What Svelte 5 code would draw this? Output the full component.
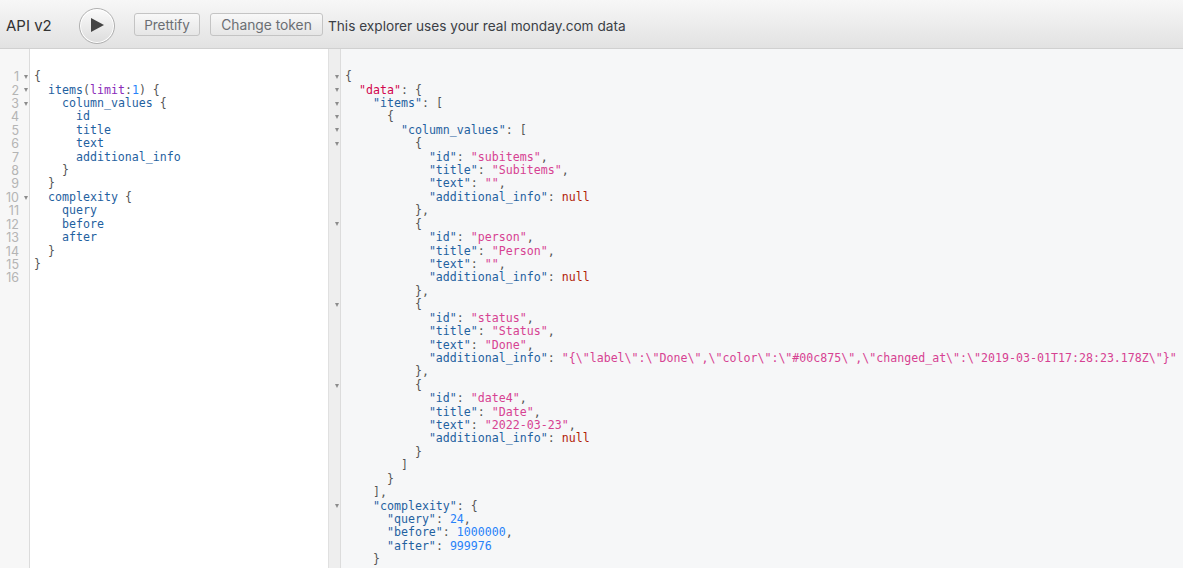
<script>
  const q = [
    [['p','{']],
    [['s','  '],['f','items'],['p','('],['a','limit'],['p',':'],['n','1'],['p',') {']],
    [['s','    '],['f','column_values'],['p',' {']],
    [['s','      '],['f','id']],
    [['s','      '],['f','title']],
    [['s','      '],['f','text']],
    [['s','      '],['f','additional_info']],
    [['s','    '],['p','}']],
    [['s','  '],['p','}']],
    [['s','  '],['f','complexity'],['p',' {']],
    [['s','    '],['f','query']],
    [['s','    '],['f','before']],
    [['s','    '],['f','after']],
    [['s','  '],['p','}']],
    [['p','}']],
    []
  ];
  const qFold = [0, 1, 2, 9];

  const col = (id, title, text, info, last) => [
    '          {',
    `            "id": "${id}",`,
    `            "title": "${title}",`,
    `            "text": "${text}",`,
    `            "additional_info": ${info}`,
    last ? '          }' : '          },'
  ];
  const src = [
    '{',
    '  "data": {',
    '    "items": [',
    '      {',
    '        "column_values": [',
    ...col('subitems', 'Subitems', '', 'null'),
    ...col('person', 'Person', '', 'null'),
    ...col('status', 'Status', 'Done', '"{\\"label\\":\\"Done\\",\\"color\\":\\"#00c875\\",\\"changed_at\\":\\"2019-03-01T17:28:23.178Z\\"}"'),
    ...col('date4', 'Date', '2022-03-23', 'null', true),
    '        ]',
    '      }',
    '    ],',
    '    "complexity": {',
    '      "query": 24,',
    '      "before": 1000000,',
    '      "after": 999976',
    '    }'
  ];
  const tokenize = (line) => {
    const out = [];
    const re = /("(?:[^"\\]|\\.)*")(:?)|(-?\d+)|(null)|(\s+)|([^\s])/g;
    let m;
    while ((m = re.exec(line))) {
      if (m[1]) {
        if (m[2]) {
          out.push([m[1] === '"data"' ? 'd' : 'f', m[1]]);
          out.push(['p', ':']);
        } else out.push(['t', m[1]]);
      } else if (m[3]) out.push(['n', m[3]]);
      else if (m[4]) out.push(['k', m[4]]);
      else if (m[5]) out.push(['s', m[5]]);
      else out.push(['p', m[6]]);
    }
    return out;
  };
  const res = src.map(tokenize);
  const resFold = [0, 1, 2, 3, 4, 5, 11, 17, 23, 32];
</script>

<div class="page">
  <header class="bar">
    <span class="title">API v2</span>
    <button class="play" aria-label="Run">
      <svg class="play-icon" width="13" height="14" viewBox="0 0 13 14"><path d="M0 0 13 7 0 14Z" fill="#444"/></svg>
    </button>
    <button class="btn prettify">Prettify</button>
    <button class="btn token">Change token</button>
    <span class="note">This explorer uses your real monday.com data</span>
  </header>
  <main class="panes">
    <section class="editor">
      <div class="code">
        {#each q as line, i}
          <div class="line">
            <span class="gut"><span class="num">{i + 1}</span><span class="fold">{#if qFold.includes(i)}<i class="tri"></i>{/if}</span></span>
            <pre class="txt">{#each line as t}<span class={t[0]}>{t[1]}</span>{/each}</pre>
          </div>
        {/each}
      </div>
    </section>
    <section class="result">
      <div class="code">
        {#each res as line, i}
          <div class="line">
            <span class="gut"><span class="fold">{#if resFold.includes(i)}<i class="tri"></i>{/if}</span></span>
            <pre class="txt">{#each line as t}<span class={t[0]}>{t[1]}</span>{/each}</pre>
          </div>
        {/each}
      </div>
    </section>
  </main>
</div>

<style>
  :global(body) { margin: 0; overflow: hidden; background: #fff; }
  .page { width: 1183px; height: 568px; display: flex; flex-direction: column; overflow: hidden; }
  .bar {
    height: 48px; flex: none; display: flex; align-items: center; box-sizing: content-box;
    border-bottom: 1px solid #d0d0d0; padding: 0 0 0 6px;
    background: linear-gradient(#f7f7f7, #e2e2e2);
    font-family: Inter, "Noto Sans", sans-serif; color: #3b3f46;
  }
  .title { font-size: 15px; width: 55px; margin-right: 18px; margin-top: 2px; color: #333; }
  .play {
    width: 36px; height: 36px; border-radius: 50%; padding: 0 0 0 1px; margin: 4px 19px 0 0; box-sizing: border-box;
    border: 1px solid #b0b0b0; background: linear-gradient(#fbfbfb, #dcdcdc);
    display: flex; align-items: center; justify-content: center;
    box-shadow: inset 0 0 0 1px #fff;
  }
  .play-icon { margin-bottom: 2px; }
  .btn {
    height: 23px; box-sizing: border-box; padding: 0; border: 1px solid #c4c4c4; border-radius: 3px;
    background: linear-gradient(#f8f8f8, #e6e6e6); color: #6b6e73;
    font: 13.5px Inter, "Noto Sans", sans-serif; margin-top: 1px;
  }
  .prettify { width: 66px; margin-right: 10px; }
  .token { width: 113px; margin-right: 5px; font-size: 13.8px; }
  .note { font-size: 13.65px; white-space: nowrap; margin-top: 3px; }
  .panes { flex: 1; display: flex; min-height: 0; }
  .editor { width: 328px; flex: none; border-right: 1px solid #e0e0e0; overflow: hidden; background:
    linear-gradient(#f7f7f7, #f7f7f7) 0 0 / 29px 100% no-repeat, linear-gradient(#dcdcdc, #dcdcdc) 29px 0 / 1px 100% no-repeat, #fff; }
  .result { flex: 1; min-width: 0; overflow: hidden; background:
    linear-gradient(#eeeeee, #eeeeee) 0 0 / 11px 100% no-repeat, linear-gradient(#dcdcdc, #dcdcdc) 11px 0 / 1px 100% no-repeat, #f6f7f8; }
  .code { padding-top: 21.1px; font: 11.62px/13.43px "DejaVu Sans Mono", "Liberation Mono", monospace; }
  .line { display: flex; height: 13.43px; }
  .gut { display: flex; flex: none; }
  .editor .gut { width: 34px; }
  .result .gut { width: 16px; }
  .num { width: 19px; text-align: right; color: #b4b4b4; font: 12.5px/13.43px Inter, sans-serif; }
  .fold { width: 14px; display: flex; align-items: center; justify-content: center; }
  .result .fold { width: 16px; }
  .tri { width: 0; height: 0; border-left: 2.5px solid transparent; border-right: 2.5px solid transparent; border-top: 4px solid #8c8c8c; }
  .txt { margin: 0; font: inherit; white-space: pre; }
  .p { color: #555; }
  .f { color: #1f61a0; }
  .a { color: #8b2bb9; }
  .n { color: #2882f9; }
  .t { color: #d64292; }
  .k { color: #b11a04; }
  .d { color: #d2054e; }
</style>
